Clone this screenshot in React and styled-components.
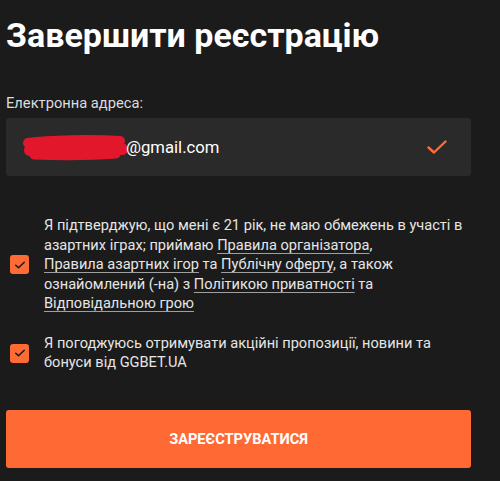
import React from "react";
import styled, { createGlobalStyle } from "styled-components";

const Global = createGlobalStyle`
  html, body {
    margin: 0;
    background: #1b1b1b;
  }
  body {
    font-family: Roboto, "Noto Sans", Arial, sans-serif;
    color: #e8e8e8;
  }
`;

const Page = styled.div`
  width: 465px;
  padding: 16px 29px 0 6px;
`;

const Title = styled.h1`
  margin: 0;
  font-size: 34px;
  line-height: 38px;
  font-weight: 700;
  color: #fff;
`;

const Label = styled.label`
  display: block;
  margin-top: 41px;
  font-size: 14.7px;
  line-height: 16px;
  color: #ddd;
`;

const Field = styled.div`
  margin-top: 7px;
  height: 58px;
  background: #2a2a2a;
  border-radius: 3px;
  display: flex;
  align-items: center;
  padding: 0 24px 0 14px;
  box-sizing: border-box;
`;

const Value = styled.div`
  flex: 1;
  display: flex;
  align-items: center;
  font-size: 16.7px;
  color: #fff;
`;

const Blot = styled.svg`
  margin-right: -4px;
  margin-top: 2px;
`;

const Agreements = styled.div`
  margin-top: 40px;
  display: flex;
  flex-direction: column;
  gap: 20px;
`;

const Row = styled.div`
  display: flex;
  align-items: center;
  gap: 15px;
  padding-left: 4px;
`;

const Box = styled.span`
  flex: none;
  width: 19px;
  height: 19px;
  border-radius: 3px;
  background: #ff6b35;
  display: flex;
  align-items: center;
  justify-content: center;
`;

const Text = styled.p`
  margin: 0;
  max-width: 424px;
  font-size: 14.6px;
  line-height: 19.5px;
  color: #e6e6e6;
`;

const NoWrap = styled.span`
  white-space: nowrap;
`;

const Link = styled.a`
  color: #e6e6e6;
  white-space: nowrap;
  text-decoration: underline;
  text-underline-offset: 3px;
  text-decoration-color: #a0a0a0;
`;

const Submit = styled.button`
  margin-top: 37px;
  width: 100%;
  height: 58px;
  border: none;
  border-radius: 3px;
  background: #ff6a34;
  color: #fff;
  font-family: Roboto, Arial, sans-serif;
  font-size: 14.6px;
  font-weight: 700;
  text-transform: uppercase;
`;

function Redaction() {
  return (
    <Blot width="110" height="28" viewBox="0 0 110 28">
      <g stroke="#e3172b" strokeLinecap="round" fill="none">
        <path d="M8 9 C30 6 70 5 100 7" strokeWidth="10" />
        <path d="M10 16 C40 15 75 14 102 15" strokeWidth="12" />
        <path d="M14 21 C40 22 70 22 96 20" strokeWidth="9" />
      </g>
    </Blot>
  );
}

function Tick({ color, w, h, sw }) {
  return (
    <svg width={w} height={h} viewBox="0 0 20 14" fill="none">
      <path
        d="M1.5 7.5 L7 12.5 L18.5 1.5"
        stroke={color}
        strokeWidth={sw}
        strokeLinecap="round"
        strokeLinejoin="round"
      />
    </svg>
  );
}

function Check() {
  return (
    <Box>
      <Tick color="#1b1b1b" w={10} h={8} sw={3.2} />
    </Box>
  );
}

export default function App() {
  return (
    <>
      <Global />
      <Page>
        <Title>Завершити реєстрацію</Title>
        <Label>Електронна адреса:</Label>
        <Field>
          <Value>
            <Redaction />
            <span>@gmail.com</span>
          </Value>
          <Tick color="#ff6b35" w={20} h={14} sw={2.4} />
        </Field>
        <Agreements>
          <Row>
            <Check />
            <Text>
              Я підтверджую, що мені є 21 рік, не маю обмежень в участі в
              азартних іграх; приймаю <Link href="#">Правила організатора</Link>,{" "}
              <Link href="#">Правила азартних ігор</Link> та{" "}
              <Link href="#">Публічну оферту</Link>, а також ознайомлений{" "}
              <NoWrap>(-на)</NoWrap> з{" "}
              <Link href="#">Політикою приватності</Link> та{" "}
              <Link href="#">Відповідальною грою</Link>
            </Text>
          </Row>
          <Row>
            <Check />
            <Text>
              Я погоджуюсь отримувати акційні пропозиції, новини та бонуси від
              GGBET.UA
            </Text>
          </Row>
        </Agreements>
        <Submit>Зареєструватися</Submit>
      </Page>
    </>
  );
}
